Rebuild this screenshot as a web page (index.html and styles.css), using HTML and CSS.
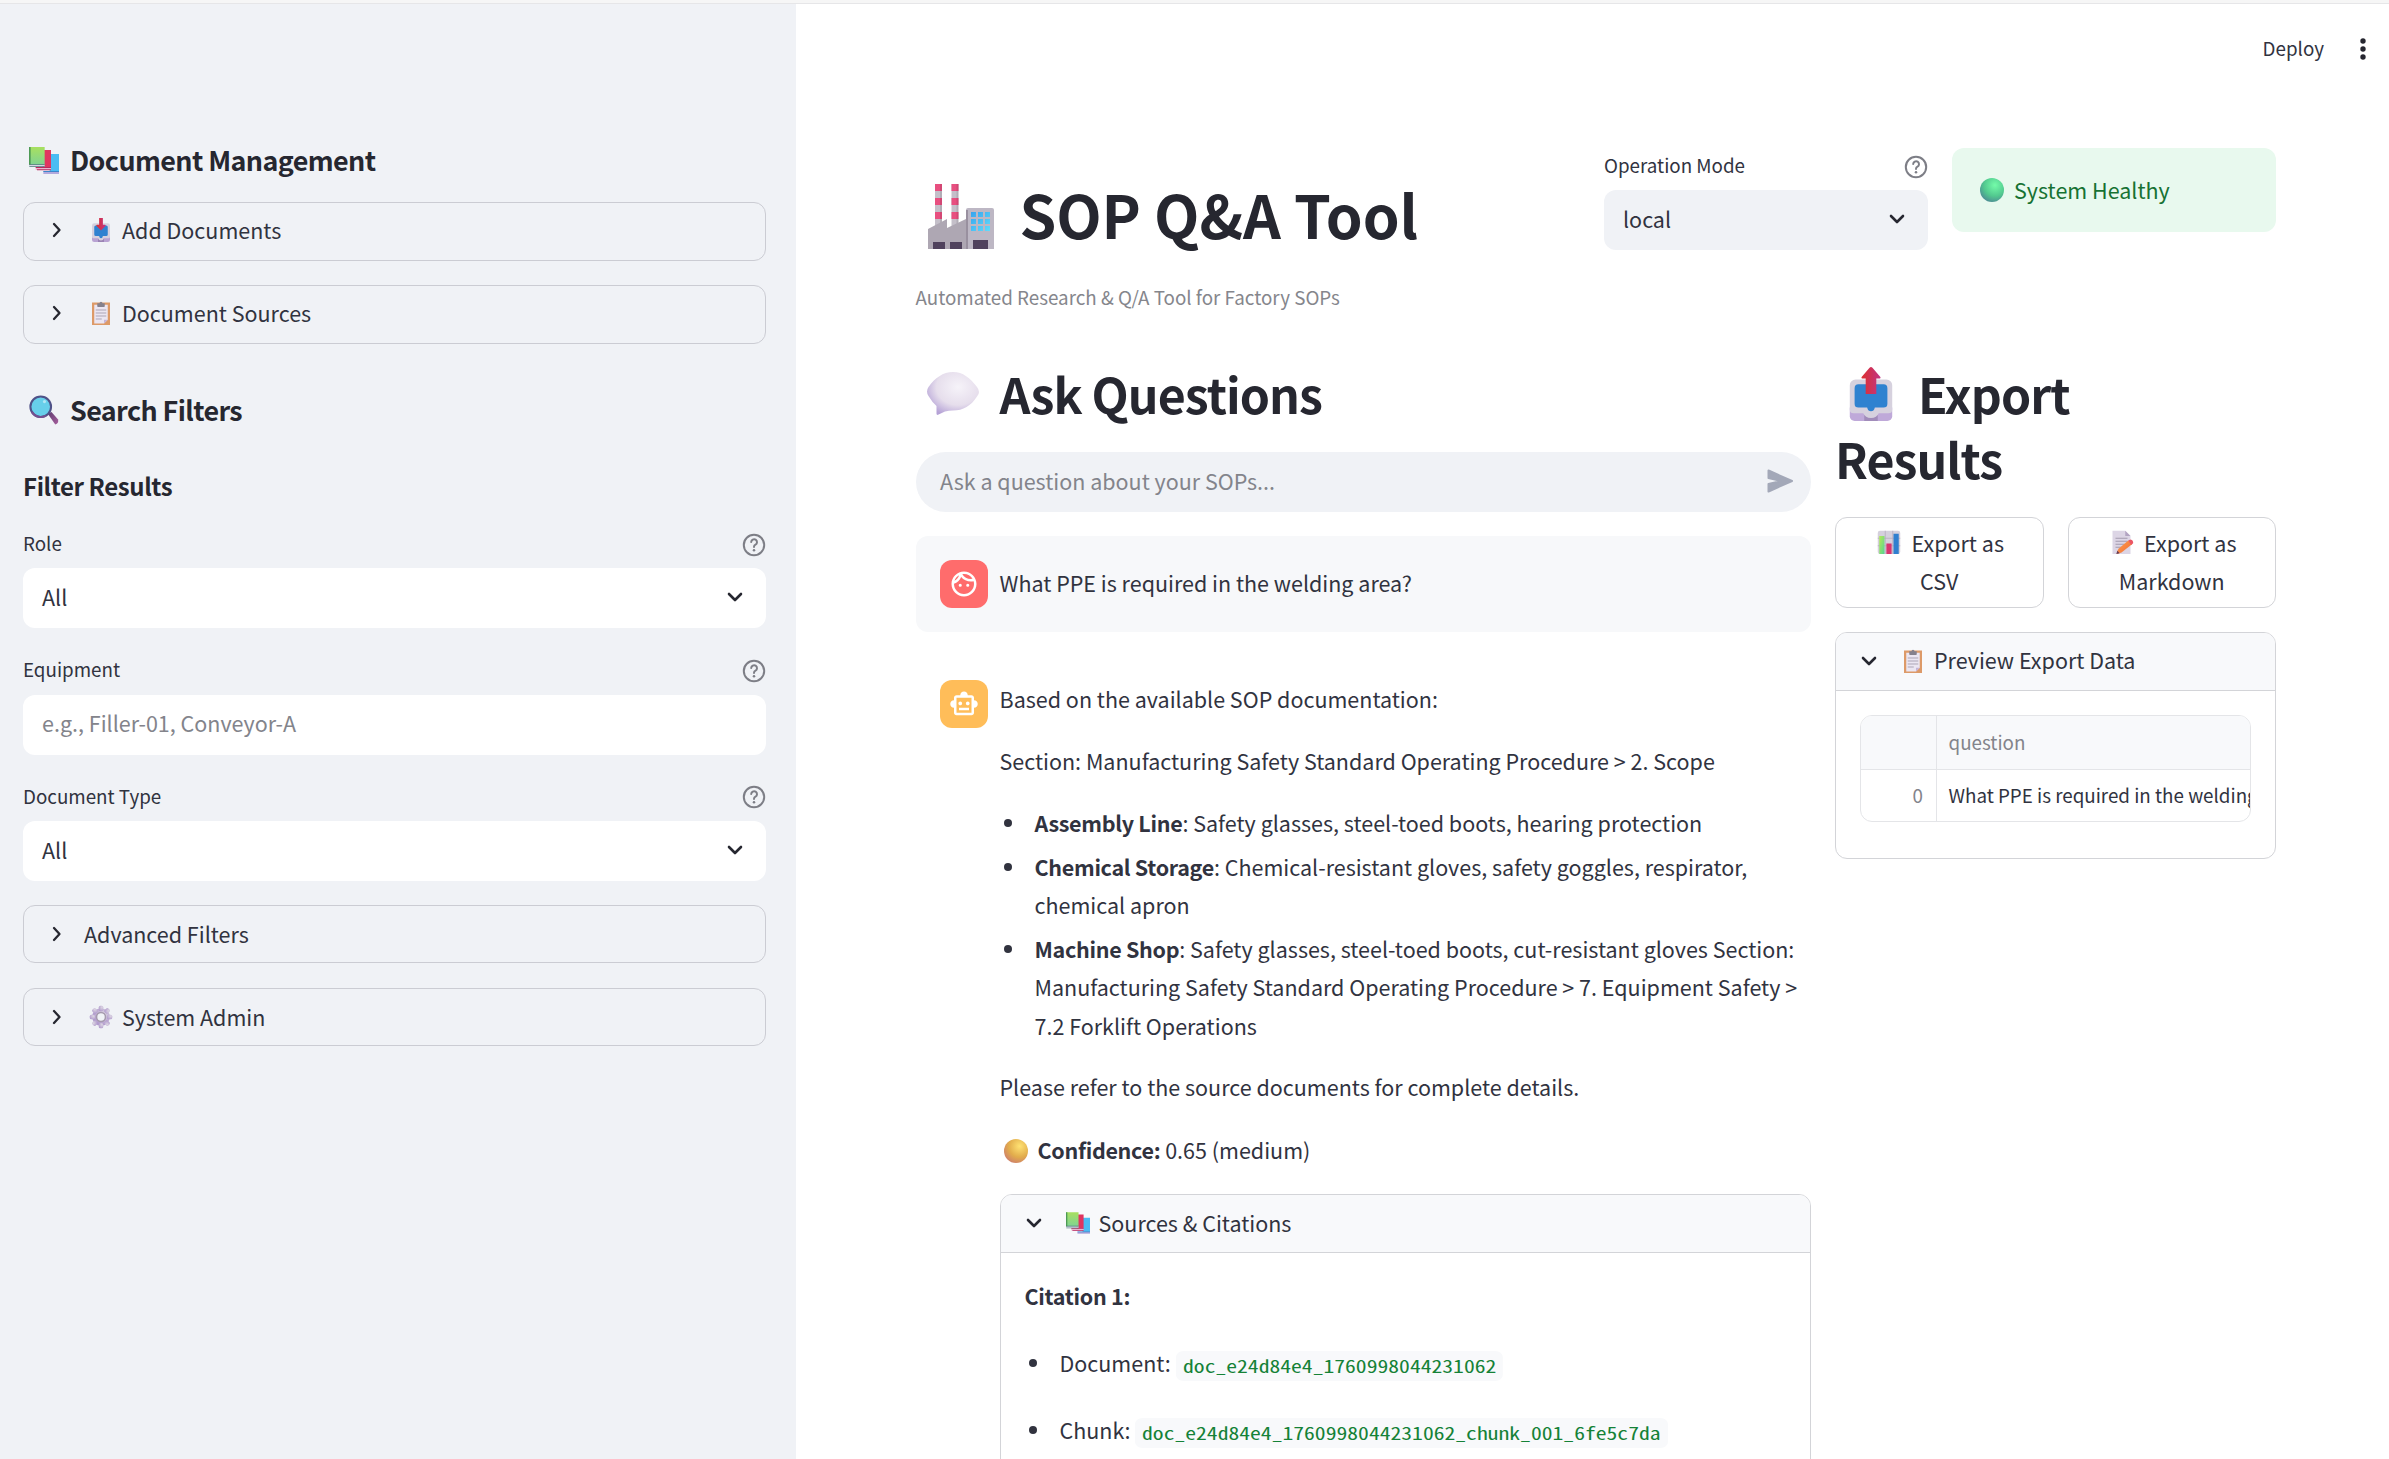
FILE: index.html
```html
<!DOCTYPE html>
<html lang="en">
<head>
<meta charset="utf-8">
<title>SOP Q&amp;A Tool</title>
<link rel="stylesheet" href="styles.css">
</head>
<body>
<svg class="defs" aria-hidden="true">
  <defs>
    <linearGradient id="gGreen" x1="0" y1="0" x2="0" y2="1"><stop offset="0" stop-color="#a8e05f"/><stop offset="1" stop-color="#7fd393"/></linearGradient>
    <linearGradient id="gArrow" x1="0" y1="0" x2="1" y2="0"><stop offset="0" stop-color="#dc2f2f"/><stop offset="1" stop-color="#c13584"/></linearGradient>
    <linearGradient id="gBar" x1="0" y1="0" x2="1" y2="1"><stop offset="0" stop-color="#b5ea55"/><stop offset="1" stop-color="#57d494"/></linearGradient>
    <linearGradient id="gWin" x1="0" y1="0" x2="1" y2="1"><stop offset="0" stop-color="#36a4ee"/><stop offset="1" stop-color="#62dcfb"/></linearGradient>
    <linearGradient id="gHandle" x1="0" y1="0" x2="1" y2="1"><stop offset="0" stop-color="#5c3a6e"/><stop offset="1" stop-color="#a8609e"/></linearGradient>
    <linearGradient id="gPencil" x1="0" y1="0" x2="1" y2="1"><stop offset="0" stop-color="#ffa04d"/><stop offset="1" stop-color="#f06a34"/></linearGradient>
    <radialGradient id="gBallG" cx=".62" cy=".3" r=".75"><stop offset="0" stop-color="#74fba9"/><stop offset=".6" stop-color="#52c98f"/><stop offset="1" stop-color="#4d8c94"/></radialGradient>
    <radialGradient id="gBallY" cx=".65" cy=".3" r=".75"><stop offset="0" stop-color="#ffe273"/><stop offset=".6" stop-color="#e2ad4c"/><stop offset="1" stop-color="#cf8268"/></radialGradient>
    <radialGradient id="gBubble" cx=".6" cy=".35" r=".7"><stop offset="0" stop-color="#f6f3f9"/><stop offset=".6" stop-color="#e6deec"/><stop offset="1" stop-color="#b5a2d6"/></radialGradient>
    <radialGradient id="gGear" cx=".7" cy=".3" r=".8"><stop offset="0" stop-color="#dcd6e2"/><stop offset="1" stop-color="#b29ccd"/></radialGradient>

    <symbol id="books" viewBox="0 0 90 81">
      <path d="M62 21h28v53H62z" fill="#4bbcf3"/><path d="M43 73h47v8H43z" fill="#b3a9dd"/><path d="M43 72h47v3H43z" fill="#3b86cb"/>
      <path d="M40 9h26v52H40z" fill="#e03560"/><path d="M20 61h46v8H20z" fill="#e8b6cf"/><path d="M20 60h46v3H20zM24 67h42v2.500H24z" fill="#b92860"/>
      <path d="M0 0h47v54H0z" fill="url(#gGreen)"/><path d="M0 0h5v55H0z" fill="#4d9a55"/><path d="M1 53h46v6H1z" fill="#d8d5e6"/><path d="M1 51h46v2.500H1zM1 58h46v2H1z" fill="#4c7b78"/>
    </symbol>
    <symbol id="tray" viewBox="0 0 32 32">
      <path d="M4 21h24v8a3 3 0 0 1-3 3H7a3 3 0 0 1-3-3z" fill="#b9a3d3"/><path d="M12 26h8v6h-8z" fill="#9a83b4"/>
      <path d="M7 7h18a3 3 0 0 1 3 3v15a2 2 0 0 1-2 2h-6q-1 3-4 3t-4-3H6a2 2 0 0 1-2-2V10a3 3 0 0 1 3-3z" fill="#d6d1de"/>
      <path d="M9 10h14a2 2 0 0 1 2 2v10a2 2 0 0 1-2 2h-4.500q-.5 3-2.500 3t-2.500-3H9a2 2 0 0 1-2-2V12a2 2 0 0 1 2-2z" fill="#2f82d0"/>
    </symbol>
    <symbol id="inbox" viewBox="0 0 32 32"><use href="#tray"/><path d="M13.500 0h5v9h3l1 1-6.500 6.500L9.500 10l1-1h3z" fill="url(#gArrow)"/></symbol>
    <symbol id="outbox" viewBox="0 0 48 56">
      <path d="M2 42h44v9a5 5 0 0 1-5 5H7a5 5 0 0 1-5-5z" fill="#bfa9d9"/><path d="M17 48h14v8H17z" fill="#a18cba"/>
      <path d="M8 13h32a6 6 0 0 1 6 6v25a4 4 0 0 1-4 4H32q-2 5-8 5t-8-5H6a4 4 0 0 1-4-4V19a6 6 0 0 1 6-6z" fill="#d6d1de"/>
      <path d="M11 18h26a4 4 0 0 1 4 4v16a4 4 0 0 1-4 4h-9q-1 4-4 4t-4-4h-9a4 4 0 0 1-4-4V22a4 4 0 0 1 4-4z" fill="#2f82d0"/>
      <path d="M18.500 28h11V12h3.500q1.500-.5.5-2L25.500.8q-1.500-1.600-3 0L14.500 10q-1 1.500.5 2h3.500z" fill="url(#gArrow)"/>
    </symbol>
    <symbol id="clipboard" viewBox="0 0 32 32">
      <path d="M4 2h24v30H4z" fill="#dd9a68"/><path d="M7 5h18v20l-5 5H7z" fill="#ebe6f2"/><path d="M20 30l5-5h-5z" fill="#c5b4d8"/>
      <path d="M11 3h3a2 2 0 0 1 4 0h3v4q0 1-1 1h-8q-1 0-1-1z" fill="#85818d"/>
      <path d="M9 12h14M9 16h14M9 20h14M9 24h8" stroke="#aaa3b5" stroke-width="1.300"/>
    </symbol>
    <symbol id="magnifier" viewBox="0 0 32 32">
      <path d="M20 20l4-2 7 8q1 4-3 5.500z" fill="url(#gHandle)"/><circle cx="12.500" cy="12.500" r="11" fill="#67cfea" stroke="#4f5288" stroke-width="2.200"/>
      <path d="M3 18a11 11 0 0 0 15 4" stroke="#75508f" stroke-width="2.200" fill="none"/><circle cx="16.500" cy="7" r="1.700" fill="#b0e7f5"/>
    </symbol>
    <symbol id="gear" viewBox="0 0 32 32">
      <circle cx="16" cy="16" r="8.500" fill="none" stroke="url(#gGear)" stroke-width="6.500"/>
      <g fill="url(#gGear)"><rect x="13" y="1" width="6" height="7" rx="2"/><rect x="13" y="24" width="6" height="7" rx="2"/><rect x="1" y="13" width="7" height="6" rx="2"/><rect x="24" y="13" width="7" height="6" rx="2"/><rect x="13" y="1" width="6" height="7" rx="2" transform="rotate(45 16 16)"/><rect x="13" y="1" width="6" height="7" rx="2" transform="rotate(135 16 16)"/><rect x="13" y="1" width="6" height="7" rx="2" transform="rotate(225 16 16)"/><rect x="13" y="1" width="6" height="7" rx="2" transform="rotate(315 16 16)"/></g>
      <circle cx="16" cy="16" r="6" fill="none" stroke="#a59aad" stroke-width="2"/>
    </symbol>
    <symbol id="factory" viewBox="0 0 66 66">
      <path d="M7 0h7v44H7zM23.500 0h7v44h-7z" fill="#c4bfc9"/><path d="M7 0h7v7H7zM23.500 0h7v7h-7zM7 14h7v7H7zM23.500 14h7v7h-7zM7 28h7v7H7zM23.500 28h7v7h-7z" fill="#e84f80"/>
      <path d="M12 0h2v44h-2zM28.500 0h2v44h-2z" fill="#000" opacity=".09"/>
      <path d="M0 45l19-10v9l19-9v30H0z" fill="#aea7b3"/><path d="M38 26q0-2 2-2h24q2 0 2 2v39H38z" fill="#bdb7c4"/><path d="M38 26h2v39h-2z" fill="#99909f"/>
      <path d="M5 58h12v7H5zM22 58h12v7H22zM45 56h15v9H45z" fill="#50425d"/>
      <path d="M43 28h5v5h-5zM50 28h5v5h-5zM57 28h5v5h-5zM43 35h5v5h-5zM50 35h5v5h-5zM57 35h5v5h-5zM43 42h5v5h-5zM50 42h5v5h-5zM57 42h5v5h-5z" fill="url(#gWin)"/>
    </symbol>
    <symbol id="bubble" viewBox="0 0 52 43"><path d="M26 0C36 0 43 6 50 15q4 5 0 9.500C44 34 36 38.500 26 38.500q-4 0-8 1L10.500 43q-1.200 0-1-2V34Q5 30 1.500 24q-3-4.500 0-9C8 6 16 0 26 0z" fill="url(#gBubble)"/></symbol>
    <symbol id="chart" viewBox="0 0 32 32"><rect x="1" y="1" width="30" height="31" rx="3" fill="#d5d0dc"/><path d="M11 1v31M21 1v31M1 11h30M1 21h30" stroke="#b1a9bb" stroke-width="1"/><path d="M3 8h7v24H3z" fill="url(#gBar)"/><path d="M12.500 18h7v14h-7z" fill="#d9356f"/><path d="M22 5h7v27h-7z" fill="#307fcf"/></symbol>
    <symbol id="memo" viewBox="0 0 32 32"><path d="M2 1h17l7 7v24H2z" fill="#dcd5e5"/><path d="M19 1l7 7h-7z" fill="#b2a4c2"/><path d="M6 11h16M6 15h16M6 19h12M6 23h9" stroke="#9c94a7" stroke-width="1.200"/><path d="M8 29l2-4 13-11 5 5-14 11-6 2z" fill="url(#gPencil)"/><path d="M23 14l3-1.500q4 1 3.500 5L27 20z" fill="#eb5565"/><path d="M7 32l1.500-4.500 3 3.500z" fill="#613b58"/></symbol>
    <symbol id="ballG" viewBox="0 0 24 24"><circle cx="12" cy="12" r="12" fill="url(#gBallG)"/></symbol>
    <symbol id="ballY" viewBox="0 0 24 24"><circle cx="12" cy="12" r="12" fill="url(#gBallY)"/></symbol>
    <symbol id="help" viewBox="0 0 24 24"><g fill="none" stroke="#7d7e86" stroke-width="2" stroke-linecap="round"><circle cx="12" cy="12" r="10.200"/><path d="M9.200 9a2.900 2.900 0 1 1 4.300 2.700q-1.500.8-1.500 2.200"/></g><circle cx="12" cy="17.200" r="1.250" fill="#7d7e86"/></symbol>
    <symbol id="down" viewBox="0 0 16 16"><path d="M2 5l6 6 6-6" fill="none" stroke="currentColor" stroke-width="2.600" stroke-linecap="round" stroke-linejoin="round"/></symbol>
    <symbol id="right" viewBox="0 0 16 16"><path d="M5 2l5.500 6L5 14" fill="none" stroke="currentColor" stroke-width="2.300" stroke-linecap="round" stroke-linejoin="round"/></symbol>
  </defs>
</svg>

<div class="strip"></div>
<div class="app">
  <aside class="sidebar">
    <h2 class="side-title"><svg class="emo-side books"><use href="#books"/></svg>Document Management</h2>
    <div class="expander"><svg class="chev"><use href="#right"/></svg><svg class="emo"><use href="#inbox"/></svg>Add Documents</div>
    <div class="expander"><svg class="chev"><use href="#right"/></svg><svg class="emo"><use href="#clipboard"/></svg>Document Sources</div>
    <h2 class="side-title second"><svg class="emo-side"><use href="#magnifier"/></svg>Search Filters</h2>
    <h3 class="side-sub">Filter Results</h3>
    <div class="field"><div class="label">Role<svg class="help"><use href="#help"/></svg></div><div class="control">All<svg class="chev"><use href="#down"/></svg></div></div>
    <div class="field"><div class="label">Equipment<svg class="help"><use href="#help"/></svg></div><div class="control placeholder">e.g., Filler-01, Conveyor-A</div></div>
    <div class="field"><div class="label">Document Type<svg class="help"><use href="#help"/></svg></div><div class="control">All<svg class="chev"><use href="#down"/></svg></div></div>
    <div class="expander low"><svg class="chev"><use href="#right"/></svg>Advanced Filters</div>
    <div class="expander low"><svg class="chev"><use href="#right"/></svg><svg class="emo"><use href="#gear"/></svg>System Admin</div>
  </aside>

  <main class="main">
    <header class="toolbar"><span>Deploy</span><svg class="dots" viewBox="0 0 6 22"><circle cx="3" cy="3" r="2.700"/><circle cx="3" cy="11" r="2.700"/><circle cx="3" cy="19" r="2.700"/></svg></header>

    <div class="content">
      <section class="top-row">
        <div class="heading">
          <h1 class="title"><svg class="factory"><use href="#factory"/></svg>SOP Q&amp;A Tool</h1>
          <p class="caption">Automated Research &amp; Q/A Tool for Factory SOPs</p>
        </div>
        <div class="field mode"><div class="label">Operation Mode<svg class="help"><use href="#help"/></svg></div><div class="control">local<svg class="chev"><use href="#down"/></svg></div></div>
        <div class="status"><svg class="ball"><use href="#ballG"/></svg>System Healthy</div>
      </section>

      <section class="columns">
        <div class="ask">
          <h2 class="h2"><svg class="bubble"><use href="#bubble"/></svg>Ask Questions</h2>
          <div class="chat-input">Ask a question about your SOPs...<svg class="send" viewBox="0 0 28 24"><path d="M2.500 1.500L26 12 2.500 22.500V15L15 12 2.500 9z"/></svg></div>
          <div class="message user">
            <div class="avatar red"><svg viewBox="0 0 24 24"><path d="M10.250 13a1.250 1.250 0 1 1-2.500 0 1.250 1.250 0 0 1 2.500 0zM15 11.750a1.250 1.250 0 1 0 0 2.500 1.250 1.250 0 0 0 0-2.500zM22 12c0 5.520-4.480 10-10 10S2 17.520 2 12 6.480 2 12 2s10 4.480 10 10zM10.660 4.120C12.060 6.440 14.600 8 17.500 8c.46 0 .91-.05 1.340-.12C17.440 5.560 14.900 4 12 4c-.46 0-.91.05-1.340.12zM4.420 9.470c1.710-.97 3.030-2.550 3.660-4.440C6.370 6 5.050 7.580 4.420 9.470zM20 12c0-.78-.12-1.530-.33-2.240-.7.150-1.420.24-2.170.24-3.130 0-5.920-1.440-7.760-3.690C8.690 8.870 6.600 10.880 4 11.860c.01.04 0 .09 0 .14 0 4.410 3.590 8 8 8s8-3.590 8-8z"/></svg></div>
            <p>What PPE is required in the welding area?</p>
          </div>
          <div class="message">
            <div class="avatar amber"><svg viewBox="0 0 24 24"><path d="M20 9V7c0-1.100-.9-2-2-2h-3c0-1.660-1.340-3-3-3S9 3.340 9 5H6c-1.100 0-2 .9-2 2v2c-1.660 0-3 1.340-3 3s1.340 3 3 3v4c0 1.100.9 2 2 2h12c1.100 0 2-.9 2-2v-4c1.660 0 3-1.340 3-3s-1.340-3-3-3zm-2 10H6V7h12v12zm-9-6c-.83 0-1.500-.67-1.500-1.500S8.170 10 9 10s1.500.67 1.500 1.500S9.830 13 9 13zm7.500-1.500c0 .83-.67 1.500-1.500 1.500s-1.500-.67-1.500-1.500.67-1.500 1.500-1.500 1.500.67 1.500 1.500zM8 15h8v2H8v-2z"/></svg></div>
            <div class="answer">
              <p>Based on the available SOP documentation:</p>
              <p>Section: Manufacturing Safety Standard Operating Procedure &gt; 2. Scope</p>
              <ul class="areas">
                <li><b>Assembly Line</b>: Safety glasses, steel-toed boots, hearing protection</li>
                <li><b>Chemical Storage</b>: Chemical-resistant gloves, safety goggles, respirator, chemical apron</li>
                <li><b>Machine Shop</b>: Safety glasses, steel-toed boots, cut-resistant gloves Section: Manufacturing Safety Standard Operating Procedure &gt; 7. Equipment Safety &gt; 7.2 Forklift Operations</li>
              </ul>
              <p>Please refer to the source documents for complete details.</p>
              <p class="confidence"><svg class="ball"><use href="#ballY"/></svg><b>Confidence:</b> 0.65 (medium)</p>
              <div class="panel sources">
                <div class="panel-head"><svg class="chev"><use href="#down"/></svg><svg class="emo books"><use href="#books"/></svg>Sources &amp; Citations</div>
                <div class="panel-body">
                  <p><b>Citation 1:</b></p>
                  <ul class="cites">
                    <li>Document: <code>doc_e24d84e4_1760998044231062</code></li>
                    <li>Chunk: <code>doc_e24d84e4_1760998044231062_chunk_001_6fe5c7da</code></li>
                  </ul>
                </div>
              </div>
            </div>
          </div>
        </div>

        <div class="export">
          <h2 class="h2"><svg class="outbox"><use href="#outbox"/></svg>Export<br>Results</h2>
          <div class="buttons">
            <div class="btn"><svg class="emo chart"><use href="#chart"/></svg>Export as CSV</div>
            <div class="btn"><svg class="emo"><use href="#memo"/></svg>Export as Markdown</div>
          </div>
          <div class="panel">
            <div class="panel-head"><svg class="chev"><use href="#down"/></svg><svg class="emo"><use href="#clipboard"/></svg>Preview Export Data</div>
            <div class="panel-body">
              <div class="grid">
                <div class="cell head idx"></div><div class="cell head">question</div>
                <div class="cell idx">0</div><div class="cell value">What PPE is required in the welding area?</div>
              </div>
            </div>
          </div>
        </div>
      </section>
    </div>
  </main>
</div>
</body>
</html>
```
FILE: styles.css
```css
* { box-sizing: border-box; }
html, body { margin: 0; height: 1459px; overflow: hidden; }
body {
  font-family: "Noto Sans CJK SC", "Noto Sans", sans-serif;
  font-size: 21.5px;
  line-height: 38.4px;
  color: #31333f;
  background: #fff;
}
h1, h2, h3, p, ul { margin: 0; padding: 0; }
ul { list-style: none; }
.defs { position: absolute; width: 0; height: 0; }
b { font-weight: 700; letter-spacing: -0.3px; }
svg { flex: none; }

.strip { height: 4px; background: #f6f6f6; border-bottom: 1px solid #e6e6e8; }
.app { display: flex; height: 1455px; }

.sidebar { width: 796px; flex: none; background: #f0f2f6; padding: 138px 30px 0 23px; display: flex; flex-direction: column; }
.side-title { display: flex; align-items: center; height: 36px; font-size: 26.900px; line-height: 36px; font-weight: 600; letter-spacing: -0.6px; color: #262730; margin-bottom: 24px; }
.side-title.second { margin: 24px 0 0; }
.side-sub { font-size: 24px; line-height: 30px; font-weight: 600; letter-spacing: -0.4px; color: #262730; margin: 43px 0 25px; }
.expander { display: flex; align-items: center; height: 58.5px; flex: none; border: 1px solid #cbccd3; border-radius: 12px; padding: 0 0 2px 25px; margin-bottom: 24.500px; }
.expander.low { padding-bottom: 0; }
.expander .chev, .panel-head .chev { margin-right: 19px; }
.chev { width: 16px; height: 16px; color: #262730; }
.emo { width: 24px; height: 24px; margin: 0 9px 0 5px; }
.emo.books { height: 22px; }
.emo-side { width: 30px; height: 30px; margin: 0 11px 0 6px; }
.emo-side.books { height: 27px; }
.help { width: 24px; height: 24px; margin-top: 3px; }

.field { margin-bottom: 24px; }
.label { display: flex; align-items: center; justify-content: space-between; font-size: 18.8px; line-height: 34px; height: 42.300px; padding-bottom: 8px; }
.control { display: flex; align-items: center; justify-content: space-between; height: 60px; border-radius: 12px; background: #fff; padding: 0 23px 2px 19px; }
.placeholder { color: #83848b; }

.main { flex: 1; min-width: 0; }
.toolbar { height: 90px; display: flex; justify-content: flex-end; align-items: center; gap: 36px; padding: 0 23px 1px 0; font-size: 18.8px; }
.toolbar span { padding-bottom: 1px; }
.dots { width: 6px; height: 22px; fill: #262730; }
.content { padding: 54px 113px 0 119.500px; }

.top-row { display: grid; grid-template-columns: 664.5px 324px 324px; gap: 24px; height: 213px; }
.title { display: flex; align-items: center; height: 79px; margin-top: 26px; font-size: 59px; line-height: 79px; letter-spacing: -0.1px; color: #262730; font-weight: 700; }
.factory { width: 66px; height: 66px; margin: 7px 26px 0 12px; }
.caption { font-size: 18.8px; line-height: 34px; color: #85868c; margin-top: 27px; }
.mode .control { background: #f0f2f6; }
.status { display: flex; align-items: center; height: 84px; padding: 0 0 0 28px; border-radius: 12px; background: #e8f9ee; color: #177233; }
.ball { width: 24px; height: 24px; margin-right: 10px; }

.columns { display: grid; grid-template-columns: 895.5px 441px; gap: 24px; }
.h2 { font-size: 48.3px; line-height: 64.8px; font-weight: 600; letter-spacing: -0.95px; color: #262730; }
.bubble { width: 52px; height: 43px; margin: 0 21px 0 11px; vertical-align: -1px; }
.outbox { width: 48px; height: 54px; margin: 0 23px 0 12px; vertical-align: -7px; }
.chat-input { display: flex; align-items: center; justify-content: space-between; height: 60px; margin-top: 26.5px; border-radius: 30px; background: #f0f2f6; color: #83848b; padding: 0 17px 3px 24.500px; }
.send { width: 28px; height: 24px; fill: #a3a8b8; stroke: #a3a8b8; stroke-width: 2; stroke-linejoin: round; }
.message { display: flex; gap: 12px; padding: 24px 0 24px 24px; margin-top: 24px; border-radius: 12px; }
.user { background: #f7f8fa; height: 96px; align-items: center; }
.user p { padding-bottom: 2px; }
.avatar { width: 48px; height: 48px; flex: none; border-radius: 12px; display: grid; place-items: center; }
.avatar svg { width: 30px; height: 30px; fill: #fff; }
.red { background: #ff6c6c; }
.amber { background: #ffbd59; }
.answer { flex: 1; min-width: 0; }
.answer > p { margin-bottom: 23.500px; }
.areas { margin-bottom: 23px; }
.areas li, .cites li { position: relative; padding-left: 35px; }
.areas li { margin-bottom: 5.2px; }
.areas li::before, .cites li::before { content: ""; position: absolute; left: 4px; top: 15px; width: 8px; height: 8px; border-radius: 50%; background: #31333f; }
.answer > .confidence { display: flex; align-items: center; white-space: pre; margin: 25px 0 24px; }
.confidence .ball { margin-left: 4px; }

.panel { border: 1px solid #d3d4d8; border-radius: 12px; overflow: hidden; }
.panel-head { display: flex; align-items: center; height: 58px; padding: 0 0 1px 25px; background: #f8f9fb; border-bottom: 1px solid #d3d4d8; }
.panel-body { padding: 24px; }
.cites { margin-top: 29px; }
.cites li { margin-bottom: 28.5px; height: 38.4px; }
code {
  display: inline-block;
  transform: scaleX(1.257);
  transform-origin: 0 0;
  font-family: "Noto Sans Mono CJK SC", "Liberation Mono", monospace;
  font-size: 17.2px;
  line-height: 24px;
  color: #158237;
  background: #f8f9fb;
  border-radius: 6px;
  padding: 3px 5.600px;
  vertical-align: -1px;
}

.buttons { display: grid; grid-template-columns: 1fr 1fr; gap: 24px; margin: 26px 0 24px; }
.btn { height: 91px; border: 1px solid #d3d4d8; border-radius: 12px; padding: 6px 18px; text-align: center; }
.btn .emo { margin-left: 4px; vertical-align: -2px; }
.btn .chart { margin: 0 11px 0 2px; }
.grid { display: grid; grid-template-columns: 76px 1fr; grid-template-rows: 54px 1fr; height: 107px; margin-bottom: 12px; border: 1px solid #e4e5e8; border-radius: 12px; overflow: hidden; font-size: 18.8px; }
.cell { display: flex; align-items: center; padding-left: 11.500px; white-space: nowrap; overflow: hidden; }
.head { background: #f8f9fb; color: #83848b; border-bottom: 1px solid #e4e5e8; }
.idx { border-right: 1px solid #e4e5e8; justify-content: flex-end; padding: 0 13px 0 0; color: #83848b; }
```
